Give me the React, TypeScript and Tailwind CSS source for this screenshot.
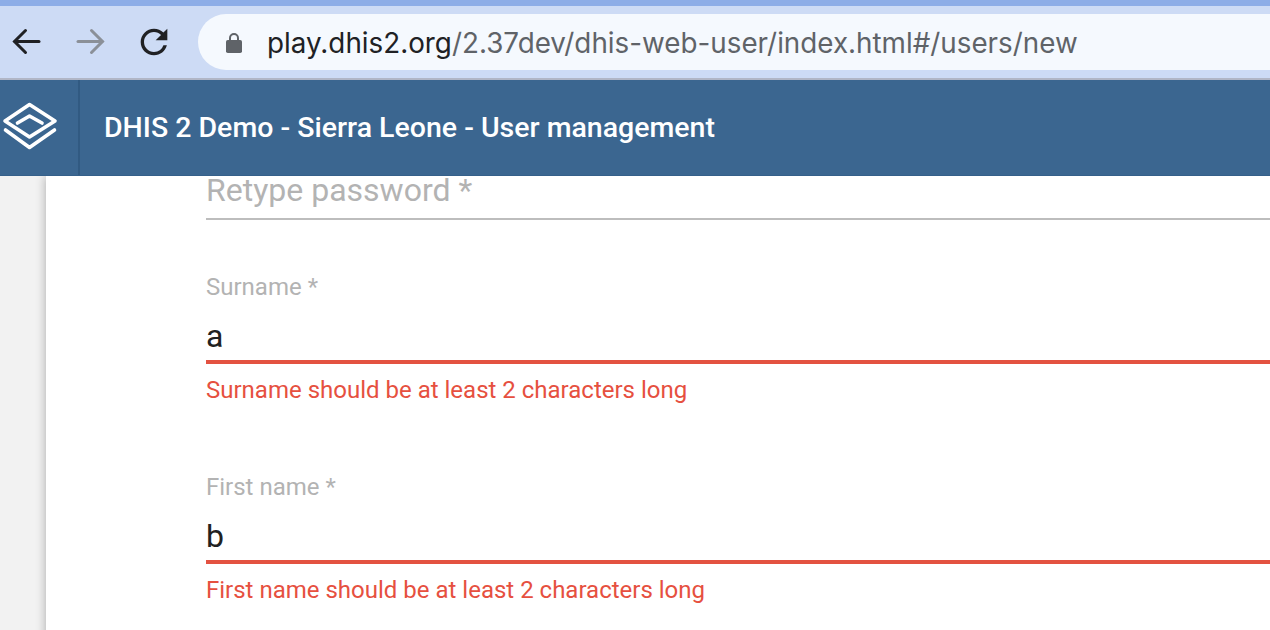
const roboto = "font-['Roboto',sans-serif]";

function Arrow({ className, flip }: { className: string; flip?: boolean }) {
  return (
    <svg aria-hidden="true" className={`size-[36px] ${flip ? "-scale-x-100" : ""} ${className}`} fill="none" stroke="currentColor" strokeWidth="3" viewBox="0 0 36 36">
      <path d="M31 17.5H7" strokeLinecap="round" />
      <path d="M17.5 6.5 6.5 17.5 17.5 28.5" strokeLinecap="round" />
    </svg>
  );
}

function Reload() {
  return (
    <svg aria-hidden="true" className="ml-[25px] size-[40px] text-[#202124]" fill="currentColor" viewBox="0 0 24 24">
      <path d="M17.65 6.35A7.958 7.958 0 0 0 12 4c-4.42 0-7.99 3.58-7.99 8s3.57 8 7.99 8c3.73 0 6.84-2.55 7.73-6h-2.08A5.99 5.99 0 0 1 12 18c-3.31 0-6-2.69-6-6s2.69-6 6-6c1.66 0 3.14.69 4.22 1.78L13 11h7V4l-2.35 2.35z" />
    </svg>
  );
}

function Lock() {
  return (
    <svg aria-hidden="true" className="h-[21px] w-[16px]" viewBox="0 0 16 21">
      <path d="M4 9V6a4 4 0 0 1 8 0v3" fill="none" stroke="#5f6368" strokeWidth="2" />
      <rect fill="#5f6368" height="13" rx="1.8" width="16" x="0" y="8" />
    </svg>
  );
}

function Logo() {
  return (
    <svg aria-hidden="true" className="mb-[4px] h-[56px] w-[60px]" fill="none" stroke="white" strokeLinecap="round" strokeLinejoin="round" strokeWidth="3.6" viewBox="0 0 60 56">
      <path d="M29.5 6.5 55 23 29.5 39 5 23Z" />
      <path d="M17.5 25 29.5 18 42 25" />
      <path d="M5.5 32 29.5 49.5 54.5 32" />
    </svg>
  );
}

interface FieldProps {
  label: string;
  value: string;
  error: string;
}

function ErrorField({ label, value, error }: FieldProps) {
  return (
    <div className="h-[200px] w-full">
      <p className="h-[24px] text-[24px] leading-[24px] text-[#b3b3b3]">{label}</p>
      <p className="mt-[21px] h-[32px] text-[32px] leading-[32px] text-[#212121]">{value}</p>
      <div className="mt-[8px] h-[4px] bg-[#e35241]" />
      <p className="mt-[12px] text-[24px] leading-[28px] text-[#e6503f]">{error}</p>
    </div>
  );
}

export default function App() {
  return (
    <div className={`flex h-[630px] w-[1270px] flex-col overflow-hidden bg-white ${roboto}`}>
      <div className="h-[6px] shrink-0 bg-[#8dade7]" />
      <div className="flex h-[74px] shrink-0 items-center border-b-2 border-[#b1b6c6] bg-[#cddbf5]">
        <div className="flex w-[198px] items-center pl-[8px]">
          <Arrow className="text-[#202124]" />
          <Arrow className="ml-[29px] text-[#8b9098]" flip />
          <Reload />
        </div>
        <div className="flex h-[56px] flex-1 items-center rounded-l-full bg-[#f5f9fe] pl-[28px]">
          <Lock />
          <p className="ml-[25px] pt-[3px] font-['Inter',sans-serif] text-[27.8px] leading-none">
            <span className="text-[#202124]">play.dhis2.org</span>
            <span className="text-[#5f6368]">/2.37dev/dhis-web-user/index.html#/users/new</span>
          </p>
        </div>
      </div>
      <header className="relative z-10 flex h-[96px] shrink-0 items-center border-b border-[#35608a] bg-[#3b6690]">
        <div className="flex h-full w-[80px] items-center border-r-2 border-[#315a82]">
          <Logo />
        </div>
        <h1 className="ml-[24px] mt-[2px] text-[28.5px] font-medium text-white">DHIS 2 Demo - Sierra Leone - User management</h1>
      </header>
      <div className="flex flex-1 bg-[#f2f2f2]">
        <div className="w-[46px] shrink-0" />
        <main className="flex-1 bg-white pl-[160px] shadow-[0_0_10px_rgba(0,0,0,0.3)]">
          <div className="h-[44px] border-b-2 border-[#bdbdbd]">
            <p className="text-[32px] leading-[28px] text-[#b3b3b3]">Retype password *</p>
          </div>
          <div className="mt-[55px]">
            <ErrorField error="Surname should be at least 2 characters long" label="Surname *" value="a" />
            <ErrorField error="First name should be at least 2 characters long" label="First name *" value="b" />
          </div>
        </main>
      </div>
    </div>
  );
}
